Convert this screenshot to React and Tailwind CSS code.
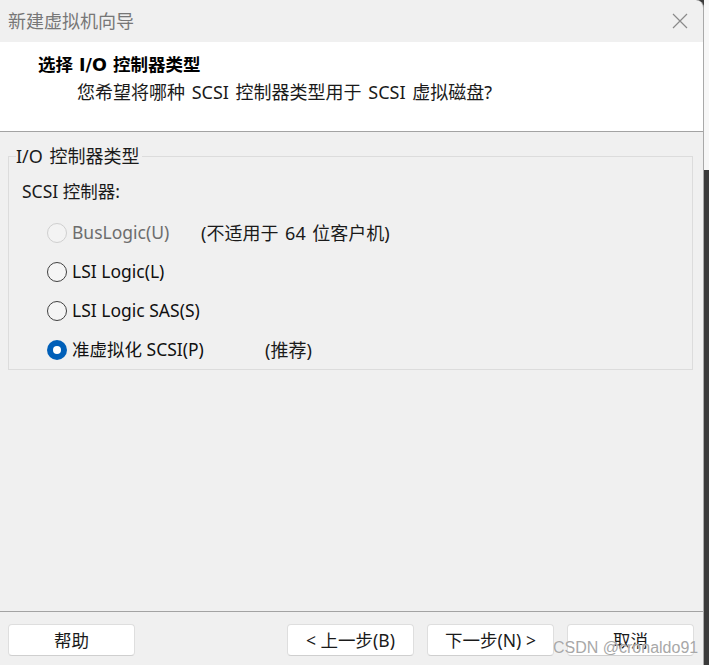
import React from 'react';

const FONT = { fontFamily: '"Noto Sans", "Noto Sans CJK SC", sans-serif' };
const HEAD_FONT = { fontFamily: '"DejaVu Sans", "Noto Sans CJK SC", sans-serif' };

function Radio({ checked, disabled }) {
  if (checked) {
    return (
      <span className="w-[20px] h-[20px] rounded-full bg-[#005fb8] flex items-center justify-center shrink-0">
        <span className="w-[8px] h-[8px] rounded-full bg-white" />
      </span>
    );
  }
  return (
    <span
      className={`w-[20px] h-[20px] rounded-full border shrink-0 ${
        disabled ? 'border-[#cfcfcf] bg-[#f3f3f3]' : 'border-[#404040] bg-[#f5f5f5]'
      }`}
    />
  );
}

// labelW keeps the trailing notes at the x they sit at in the dialog
const options = [
  { label: 'BusLogic(U)', note: '(不适用于 64 位客户机)', labelW: 'w-[129px]', disabled: true },
  { label: 'LSI Logic(L)' },
  { label: 'LSI Logic SAS(S)' },
  { label: '准虚拟化 SCSI(P)', note: '(推荐)', labelW: 'w-[193px]', checked: true },
];

function Button({ children }) {
  return (
    <button className="w-[127px] h-[32px] bg-white border border-[#dedede] border-b-[#cfcfcf] rounded-[4px] text-[17.5px] text-[#1a1a1a] flex items-center justify-center">
      {children}
    </button>
  );
}

export default function App() {
  return (
    <div className="flex w-[709px] h-[665px] overflow-hidden bg-[#3b3b3b]" style={FONT}>
      <div className="relative w-[704px] h-[665px] flex flex-col bg-[#f0f0f0] border-r border-[#a9a9a9] rounded-tr-[8px] overflow-hidden">
        {/* title bar */}
        <div className="h-[42px] shrink-0 flex items-center justify-between pl-[8px] pr-[14px]">
          <span className="text-[18px] text-[#777777] leading-none">新建虚拟机向导</span>
          <svg width="16" height="16" viewBox="0 0 16 16" className="mr-[1px]">
            <path d="M1 1 L15 15 M15 1 L1 15" stroke="#8a8a8a" strokeWidth="1.2" fill="none" />
          </svg>
        </div>

        {/* header */}
        <div className="h-[90px] shrink-0 bg-white border-b border-[#a3a3a3] pl-[38px] pt-[12px]">
          <div className="text-[17.5px] font-bold text-black leading-[22px]" style={HEAD_FONT}>
            选择 I/O 控制器类型
          </div>
          <div className="text-[18px] text-[#1a1a1a] leading-[22px] mt-[5px] pl-[39px] [word-spacing:2px]">
            您希望将哪种 SCSI 控制器类型用于 SCSI 虚拟磁盘?
          </div>
        </div>

        {/* body */}
        <div className="flex-1 pl-[8px] pr-[10px] pt-[14px]">
          <fieldset className="border border-[#dcdcdc] pl-[7px] pb-0">
            <legend className="text-[18px] leading-[20px] text-[#1a1a1a] pr-[2px] [word-spacing:2px]">I/O 控制器类型</legend>
            <div className="pl-[6px]">
              <div className="text-[17.5px] leading-[20px] text-[#1a1a1a] mt-[15px]">SCSI 控制器:</div>
              <div className="mt-[12px] pl-[25px] flex flex-col">
                {options.map((o) => (
                  <div key={o.label} className="h-[39px] flex items-center">
                    <Radio checked={o.checked} disabled={o.disabled} />
                    <span
                      className={`ml-[5px] text-[17.5px] leading-none whitespace-nowrap ${o.labelW || ''} ${
                        o.disabled ? 'text-[#6d6d6d]' : 'text-[#111111]'
                      }`}
                    >
                      {o.label}
                    </span>
                    {o.note && (
                      <span className="text-[18px] leading-none text-[#1a1a1a] whitespace-nowrap [word-spacing:2px]">{o.note}</span>
                    )}
                  </div>
                ))}
              </div>
            </div>
          </fieldset>
        </div>

        {/* footer */}
        <div className="shrink-0 border-t border-[#a3a3a3] h-[54px] pt-[12px] pl-[8px] pr-[9px] flex items-start">
          <Button>帮助</Button>
          <div className="flex-1" />
          <div className="flex gap-[13px]">
            <Button>&lt; 上一步(B)</Button>
            <Button>下一步(N) &gt;</Button>
            <Button>取消</Button>
          </div>
        </div>

        <span
          className="absolute left-[553px] top-[638px] text-[16px] leading-[20px] text-[#a8a8a8]"
          style={{ fontFamily: '"Liberation Sans", Arial, sans-serif', textShadow: '0 0 1px #ffffff' }}
        >
          CSDN @cronaldo91
        </span>
      </div>

      {/* desktop strip */}
      <div className="w-[5px] flex flex-col">
        <div className="h-[170px] bg-[#f7f7f7]" />
        <div className="flex-1 bg-[#3b3b3b]" />
      </div>
    </div>
  );
}
